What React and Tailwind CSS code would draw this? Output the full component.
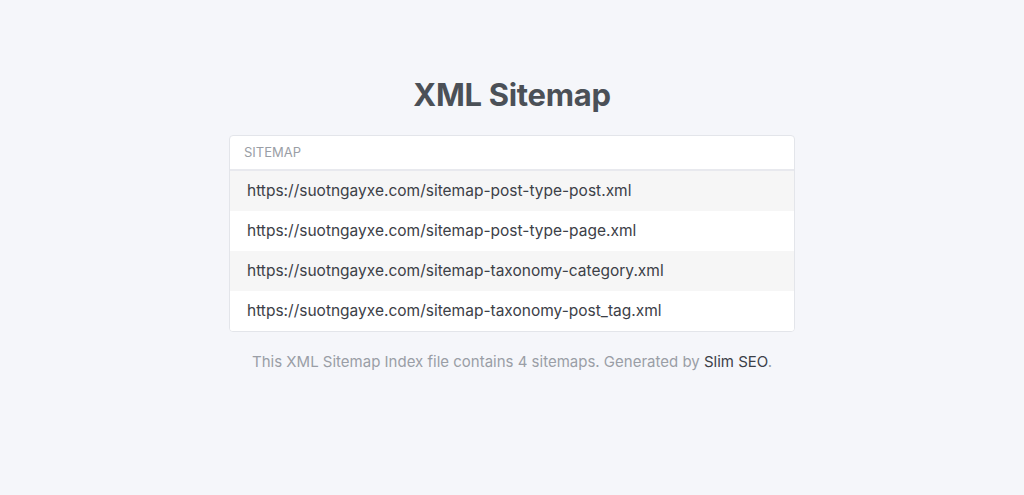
const urls = [
  "https://suotngayxe.com/sitemap-post-type-post.xml",
  "https://suotngayxe.com/sitemap-post-type-page.xml",
  "https://suotngayxe.com/sitemap-taxonomy-category.xml",
  "https://suotngayxe.com/sitemap-taxonomy-post_tag.xml",
]

export default function App() {
  return (
    <div className="min-h-[495px] bg-[#f5f6fa] flex flex-col items-center pt-[74px] font-[Inter]">
      <h1 className="text-[31px] font-bold text-[#4b5057] leading-[42px] tracking-[-0.3px]">XML Sitemap</h1>

      <div className="mt-[19px] w-[566px] bg-white rounded-[4px] border border-[#e3e5ea] overflow-hidden">
        <div className="h-[35px] flex items-center px-[14px] text-[13px] text-[#9a9ea6] border-b-2 border-[#e8e9ee]">
          SITEMAP
        </div>
        {urls.map((u, i) => (
          <div
            key={u}
            className={`h-[40px] flex items-center px-[17px] text-[15.5px] text-[#3c4047] ${i % 2 === 0 ? "bg-[#f6f6f6]" : "bg-white"}`}
          >
            {u}
          </div>
        ))}
      </div>

      <p className="mt-[19px] text-[15px] text-[#9a9ea6]">
        This XML Sitemap Index file contains 4 sitemaps. Generated by <span className="text-[#3c4047]">Slim SEO</span>.
      </p>
    </div>
  )
}
